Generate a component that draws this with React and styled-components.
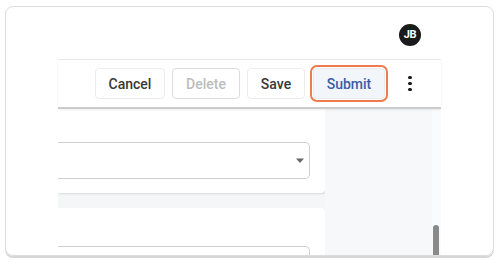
import styled, { createGlobalStyle } from "styled-components"

const Global = createGlobalStyle`
  html, body { margin: 0; padding: 0; background: #ffffff; }
  body { font-family: Roboto, "Liberation Sans", sans-serif; }
`

const Page = styled.div`
  width: 500px;
  height: 264px;
  padding: 6px 0 0 5px;
  box-sizing: border-box;
`

const Frame = styled.div`
  width: 489px;
  height: 250px;
  box-sizing: border-box;
  border: 1.5px solid #dcdcdc;
  border-radius: 8px;
  box-shadow: 0 2px 0 #d6d6d6;
  overflow: hidden;
  padding-left: 52px;
  display: flex;
  flex-direction: column;
`

const Header = styled.div`
  width: 383px;
  height: 52px;
  flex-shrink: 0;
  display: flex;
  justify-content: flex-end;
  align-items: center;
  padding-right: 20px;
  box-sizing: border-box;
`

const Avatar = styled.div`
  width: 22px;
  height: 22px;
  border-radius: 50%;
  background: #1b1b1d;
  color: #fff;
  font-size: 11px;
  font-weight: 700;
  display: flex;
  align-items: center;
  justify-content: center;
  letter-spacing: -0.4px;
  margin-top: 3px;
`

const Viewport = styled.div`
  width: 383px;
  flex: 1;
  display: flex;
  flex-direction: column;
  border-top: 1px solid #e8e8e8;
  min-height: 0;
`

const Toolbar = styled.div`
  height: 49px;
  flex-shrink: 0;
  display: flex;
  align-items: center;
  justify-content: flex-end;
  gap: 7px;
  padding-right: 23px;
  box-sizing: border-box;
  border-bottom: 2px solid #cccccc;
  box-shadow: 0 1px 2px rgba(0, 0, 0, 0.08);
  position: relative;
  z-index: 1;
`

const Button = styled.button`
  height: 31px;
  width: ${(p) => p.$w}px;
  box-sizing: border-box;
  border-radius: 4px;
  border: 1px solid ${(p) => (p.$disabled ? "#dcdcdc" : "#ececec")};
  background: ${(p) => (p.$primary ? "#f2f5f9" : "#ffffff")};
  color: ${(p) => (p.$primary ? "#3a5ea6" : p.$disabled ? "#bdbdbd" : "#383838")};
  font-family: Roboto, "Liberation Sans", sans-serif;
  font-size: 14px;
  font-weight: 500;
  padding: 0;
  outline: ${(p) => (p.$primary ? "2px solid #ee7b4f" : "none")};
  outline-offset: 1px;
  margin-left: ${(p) => (p.$primary ? "1px" : "0")};
  margin-right: ${(p) => (p.$primary ? "3px" : "0")};
`

const Kebab = styled.div`
  width: 16px;
  display: flex;
  flex-direction: column;
  align-items: center;
  gap: 2.5px;
  margin-left: 7px;
  span {
    width: 3.5px;
    height: 3.5px;
    border-radius: 50%;
    background: #1d1d1d;
  }
`

const Body = styled.div`
  flex: 1;
  display: flex;
  min-height: 0;
`

const Main = styled.div`
  width: 267px;
  background: #f5f6f8;
  display: flex;
  flex-direction: column;
  gap: 15px;
`

const Card = styled.div`
  background: #ffffff;
  height: ${(p) => p.$h}px;
  padding: ${(p) => p.$pt}px 15px 0 0;
  box-sizing: border-box;
  border-radius: ${(p) => (p.$top ? "0 4px 0 0" : "0 0 4px 0")};
  box-shadow: 1px 1px 2px rgba(0, 0, 0, 0.12);
  flex-shrink: 0;
`

const Select = styled.div`
  height: 37px;
  box-sizing: border-box;
  border: 1px solid #cfcfcf;
  border-left: none;
  border-radius: 0 5px 5px 0;
  display: flex;
  align-items: center;
  justify-content: flex-end;
  padding-right: 4px;
`

const Side = styled.div`
  width: 107px;
  background: #f7f8fa;
`

const Gutter = styled.div`
  width: 9px;
  background: #fafbfc;
  display: flex;
  justify-content: center;
  align-items: flex-end;
`

const Thumb = styled.div`
  width: 6px;
  height: 30px;
  border-radius: 3px 3px 0 0;
  background: #8a8a8a;
  margin-right: 1px;
`

export default function App() {
  return (
    <>
      <Global />
      <Page>
        <Frame>
          <Header>
            <Avatar>JB</Avatar>
          </Header>
          <Viewport>
            <Toolbar>
              <Button $w={70}>Cancel</Button>
              <Button $w={68} $disabled>Delete</Button>
              <Button $w={58}>Save</Button>
              <Button $w={72} $primary>Submit</Button>
              <Kebab>
                <span />
                <span />
                <span />
              </Kebab>
            </Toolbar>
            <Body>
              <Main>
                <Card $h={84} $pt={33}>
                  <Select>
                    <svg width="10" height="6" viewBox="0 0 10 6">
                      <path d="M1 0.5 L9 0.5 L5 5 Z" fill="#666" />
                    </svg>
                  </Select>
                </Card>
                <Card $h={60} $pt={38} $top>
                  <Select />
                </Card>
              </Main>
              <Side />
              <Gutter>
                <Thumb />
              </Gutter>
            </Body>
          </Viewport>
        </Frame>
      </Page>
    </>
  )
}
